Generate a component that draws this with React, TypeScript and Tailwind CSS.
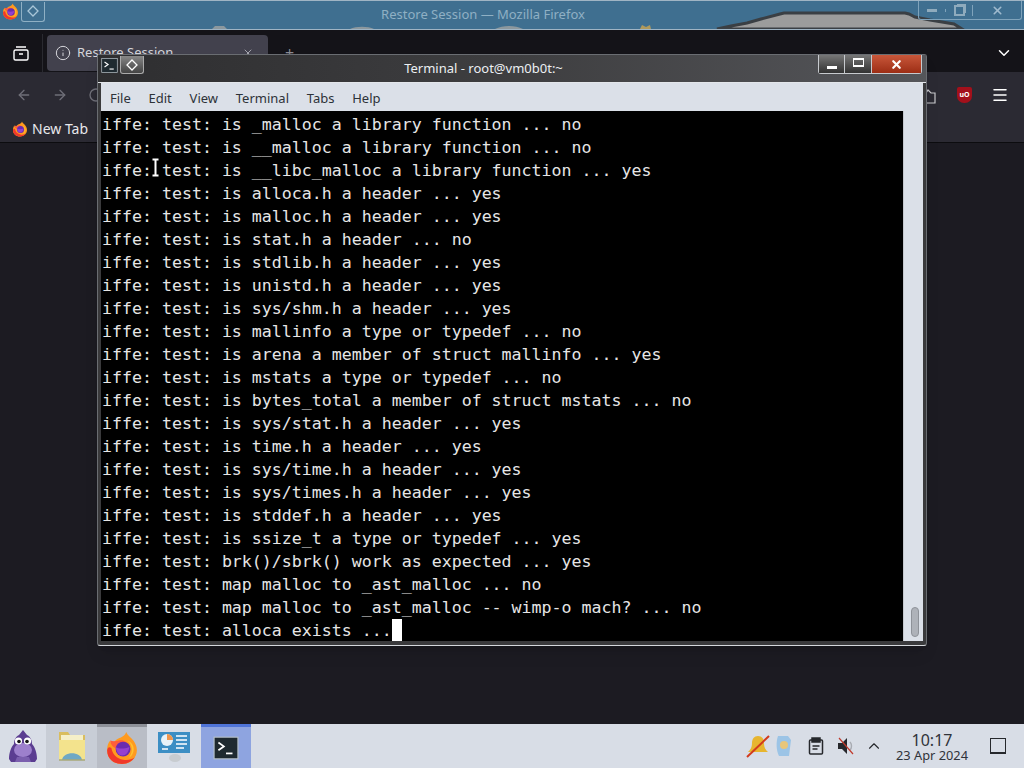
import React from "react";
import { ArrowLeft, ArrowRight, ChevronDown, ChevronUp, Info, Menu, RotateCw, X } from "lucide-react";

const lines = [
  "iffe: test: is _malloc a library function ... no",
  "iffe: test: is __malloc a library function ... no",
  "iffe: test: is __libc_malloc a library function ... yes",
  "iffe: test: is alloca.h a header ... yes",
  "iffe: test: is malloc.h a header ... yes",
  "iffe: test: is stat.h a header ... no",
  "iffe: test: is stdlib.h a header ... yes",
  "iffe: test: is unistd.h a header ... yes",
  "iffe: test: is sys/shm.h a header ... yes",
  "iffe: test: is mallinfo a type or typedef ... no",
  "iffe: test: is arena a member of struct mallinfo ... yes",
  "iffe: test: is mstats a type or typedef ... no",
  "iffe: test: is bytes_total a member of struct mstats ... no",
  "iffe: test: is sys/stat.h a header ... yes",
  "iffe: test: is time.h a header ... yes",
  "iffe: test: is sys/time.h a header ... yes",
  "iffe: test: is sys/times.h a header ... yes",
  "iffe: test: is stddef.h a header ... yes",
  "iffe: test: is ssize_t a type or typedef ... yes",
  "iffe: test: brk()/sbrk() work as expected ... yes",
  "iffe: test: map malloc to _ast_malloc ... no",
  "iffe: test: map malloc to _ast_malloc -- wimp-o mach? ... no",
];

const FoxIcon = ({ size }: { size: number }) => (
  <svg width={size} height={size} viewBox="0 0 32 32">
    <path d="M20 1c1 3 3 4 5 6 3 3 5 7 5 11 0 7-6 13-14 13S2 26 2 18c0-4 1-7 3-9 0 2 1 3 2 4 1-3 4-6 8-7 2-1 4-2 5-5z" fill="#ff9a1f" />
    <path d="M2 18c0 8 6 13 14 13 5 0 9-2 12-6-3 2-7 3-11 2-6-1-10-5-11-11-2-1-3-1-4 2z" fill="#f0392b" />
    <path d="M5 9c0 4 3 7 7 8 4 1 8 0 10-3-1-4-5-6-9-5-3 1-6 1-8 0z" fill="#ff5e3a" />
    <circle cx="17" cy="17" r="7" fill="#6a2bb0" />
    <path d="M10 15c3 2 8 2 13 0-1 5-3 8-7 8-3 0-5-3-6-8z" fill="#9440d0" />
    <path d="M21 9c3 2 5 6 4 11-1 3-2 5-4 6 3-1 6-4 6-9 0-4-3-7-6-8z" fill="#ffc22e" />
  </svg>
);

const PromptIcon = ({ size }: { size: number }) => (
  <svg width={size} height={size} viewBox="0 0 24 24" fill="none">
    <rect x="1" y="2" width="22" height="20" fill="#1f2a30" stroke="#b8c2c8" strokeWidth="1" />
    <path d="M5 7l5 3.5L5 14" stroke="#fff" strokeWidth="1.6" />
    <path d="M12 17h6" stroke="#fff" strokeWidth="1.6" />
  </svg>
);

const DiamondIcon = () => (
  <svg width="12" height="12" viewBox="0 0 12 12" fill="none">
    <path d="M6 1l5 5-5 5-5-5z" stroke="currentColor" strokeWidth="1.3" />
  </svg>
);

const Mascot = () => (
  <svg width="32" height="34" viewBox="0 0 32 34">
    <path d="M16 1l4 5c4 2 5 6 5 9 3 3 5 9 5 15l-2 3H4l-2-3c0-6 2-12 5-15 0-3 1-7 5-9z" fill="#5b3d91" />
    <ellipse cx="16" cy="21" rx="9" ry="7" fill="#9d80cc" />
    <circle cx="11.5" cy="12" r="3.6" fill="#fff" />
    <circle cx="20.5" cy="12" r="3.6" fill="#fff" />
    <circle cx="12" cy="12.5" r="1.8" fill="#111" />
    <circle cx="20" cy="12.5" r="1.8" fill="#111" />
    <path d="M8 33h16l-2-5H10z" fill="#7b5fae" />
  </svg>
);

const FolderIcon = () => (
  <svg width="30" height="32" viewBox="0 0 30 32">
    <path d="M2 2h9l2 3h15v25H2z" fill="#d9bd5f" />
    <rect x="4" y="5" width="22" height="7" fill="#f5efc8" />
    <path d="M2 10h26v20H2z" fill="#f3e38d" />
    <path d="M5 30c1-9 19-9 20 0z" fill="#6fa8c4" />
    <path d="M2 30h26" stroke="#a9a878" strokeWidth="1.5" />
  </svg>
);

const SettingsIcon = () => (
  <svg width="34" height="32" viewBox="0 0 34 32">
    <rect x="1" y="2" width="32" height="21" fill="#3c8ec4" />
    <circle cx="10" cy="10" r="6" fill="#e8f2f8" />
    <path d="M10 4a6 6 0 0 1 6 6h-6z" fill="#f0954a" />
    <path d="M19 6h11M19 10h11M19 14h11M5 19h6M19 18h8" stroke="#fff" strokeWidth="1.7" />
    <ellipse cx="18" cy="28" rx="6" ry="4" fill="#c8ccd0" />
  </svg>
);

const App = () => {
  return (
    <div className="relative flex h-[768px] w-[1024px] flex-col overflow-hidden bg-[#1c1b22] font-['Noto_Sans',sans-serif]">
      {/* firefox behind */}
      <div className="relative flex h-[30px] items-center justify-center border-y border-[#9fb4c4] bg-[#3f6f90] text-[13px] text-[#8fb0c4]">
        <div className="absolute left-0 top-0 flex h-[21px] items-center pl-[2px]">
          <FoxIcon size={17} />
          <div className="ml-[2px] flex h-[20px] w-[24px] items-center justify-center rounded-b-[3px] border border-t-0 border-[#8fb0c4] text-[#a9c6d8]">
            <DiamondIcon />
          </div>
        </div>
        <span className="ml-[-58px]">Restore Session — Mozilla Firefox</span>
        {/* wallpaper showing through the title bar */}
        <svg className="absolute bottom-0 left-0" width="1024" height="18" viewBox="0 0 1024 18">
          <path d="M717 18l14-3 16-3 14-4 19-5 4-1h121l4 1 6 3 15 3 24 4 8 5z" fill="#9c9c9c" stroke="#3a3f44" strokeWidth="3" />
          <path d="M350 18c6-3 18-3 24 0zM495 18c8-4 20-4 28 0zM212 18l3-3h9l3 3z" fill="#8c989e" />
          <path d="M640 18l2-4 4 2 4-2 1 4z" fill="#b09a5c" />
        </svg>
        <div className="absolute right-[2px] top-0 flex h-[19px] items-center rounded-b-[3px] border border-t-0 border-[#7fa3bb] text-[#9fbace]">
          <div className="flex w-[27px] justify-center border-r border-[#7fa3bb]"><div className="h-[3px] w-[10px] bg-[#8fabbd]" /></div>
          <div className="flex w-[27px] justify-center border-r border-[#7fa3bb]"><div className="h-[11px] w-[11px] border-2 border-[#8fabbd] shadow-[2px_-2px_0_-1px_#8fabbd]" /></div>
          <div className="flex w-[48px] justify-center"><X size={13} strokeWidth={3} /></div>
        </div>
      </div>
      <div className="flex h-[42px] items-center bg-[#141318] pt-[4px]">
        <div className="flex h-full w-[43px] items-center justify-center border-r border-[#2a2a30] text-white">
          <svg width="18" height="18" viewBox="0 0 18 18" fill="none" stroke="currentColor" strokeWidth="1.4">
            <rect x="2" y="6" width="14" height="10" rx="1.5" />
            <path d="M4 3h10M7 10h4" />
          </svg>
        </div>
        <div className="ml-[4px] flex h-[36px] w-[221px] items-center rounded-[4px] bg-[#42414d] px-[8px] text-[13px] text-[#d5d5da]">
          <Info size={16} strokeWidth={1.5} />
          <span className="ml-[6px]">Restore Session</span>
          <X size={12} className="ml-auto mr-[6px] text-[#a5a5ae]" />
        </div>
        <span className="ml-[17px] text-[#8a8a92]">+</span>
        <ChevronDown size={18} className="ml-auto mr-[11px] text-white" />
      </div>
      <div className="relative flex h-[43px] items-center bg-[#2b2a33] pl-[16px] pt-[3px] text-[#6f6f78]">
        <ArrowLeft size={16} />
        <ArrowRight size={16} className="ml-[20px]" />
        <RotateCw size={16} className="ml-[20px]" />
        {/* extension icon, only its right edge clears the terminal */}
        <svg className="absolute left-[921px] top-[17px]" width="15" height="15" viewBox="0 0 15 15" fill="none" stroke="#c8c8cc" strokeWidth="1.2">
          <path d="M2 4h3l2-3 3 3h4v10H2z" />
        </svg>
        <div className="ml-auto mr-[19px] flex h-[16px] w-[15px] items-center justify-center rounded-b-[7px] rounded-t-[2px] bg-[#a3101b] text-[7px] font-bold text-white">uO</div>
        <Menu size={18} className="mr-[15px] text-white" />
      </div>
      <div className="flex h-[28px] items-center gap-[4px] border-b border-[#0c0c0f] bg-[#2b2a33] pl-[12px] text-[14px] text-[#e8e8ec]">
        <FoxIcon size={16} />
        <span>New Tab</span>
      </div>
      <div className="flex-1" />

      {/* taskbar */}
      <div className="flex h-[44px] items-stretch bg-[#d8dde6]">
        <div className="flex w-[46px] items-center justify-center"><Mascot /></div>
        <div className="flex w-[51px] items-center justify-center bg-[#c8cdd6]"><FolderIcon /></div>
        <div className="flex w-[50px] items-center justify-center border-t-[3px] border-[#8d9098] bg-[#b9bdc6]"><FoxIcon size={34} /></div>
        <div className="flex w-[54px] items-center justify-center"><SettingsIcon /></div>
        <div className="flex w-[50px] items-center justify-center border-t-[3px] border-[#4f74d8] bg-[#8ea4e0]"><PromptIcon size={26} /></div>
        <div className="ml-auto flex items-center">
          <svg width="26" height="26" viewBox="0 0 26 26">
            <path d="M13 3c4 0 6 3 6 7 0 5 2 7 4 9H3c2-2 4-4 4-9 0-4 2-7 6-7z" fill="#e7b52f" />
            <path d="M2 24L24 3" stroke="#d23a1d" strokeWidth="2" />
          </svg>
          <svg className="ml-[4px]" width="18" height="24" viewBox="0 0 18 24">
            <path d="M3 2h10l3 4-2 16H4C1 16 1 8 3 2z" fill="#9cc4e6" />
            <circle cx="9" cy="11" r="4" fill="#e8c67a" />
          </svg>
          <svg className="ml-[15px]" width="16" height="18" viewBox="0 0 16 18" fill="none" stroke="#26282c" strokeWidth="1.5">
            <rect x="1.5" y="3" width="13" height="14" rx="1" />
            <rect x="4" y="1" width="8" height="4" fill="#26282c" />
            <path d="M4.5 9h7M4.5 12h5" />
          </svg>
          <svg className="ml-[12px]" width="20" height="20" viewBox="0 0 20 20" fill="none">
            <path d="M2 7h4l5-5v16l-5-5H2z" fill="#26282c" />
            <path d="M14 6c2 2 2 6 0 8" stroke="#a8abb2" strokeWidth="1.4" />
            <path d="M3 2l14 16" stroke="#c0392b" strokeWidth="1.2" />
          </svg>
          <ChevronUp size={18} strokeWidth={1.5} className="ml-[9px] text-[#26282c]" />
          <div className="ml-[12px] flex w-[74px] flex-col items-center pt-[2px] text-[#30333a]">
            <span className="text-[16px] leading-[16px]">10:17</span>
            <span className="text-[12.8px] leading-[14px]">23 Apr 2024</span>
          </div>
          <div className="ml-[21px] mr-[18px] h-[16px] w-[16px] border border-b-2 border-[#26282c]" />
        </div>
      </div>

      {/* terminal window */}
      <div className="absolute left-[97px] top-[54px] flex h-[592px] w-[830px] flex-col rounded-[3px] border border-[#6a6d72] border-b-[#d5d8dc] bg-[#3a3a3c] px-[3px] pb-[4px] shadow-lg">
        <div className="relative mx-[-3px] flex h-[28px] shrink-0 items-center justify-center border-b border-[#e3e6ea] bg-gradient-to-r from-[#2e2e30] via-[#3e3e40] to-[#55565a] text-[13px] text-[#eceff2]">
          <div className="absolute left-[3px] top-[1px] flex items-center">
            <PromptIcon size={17} />
            <div className="ml-[2px] flex h-[18px] w-[24px] items-center justify-center rounded-b-[3px] border border-t-0 border-[#aaa] bg-gradient-to-b from-[#888] to-[#444] text-white">
              <DiamondIcon />
            </div>
          </div>
          <span className="ml-[-57px]">Terminal - root@vm0b0t:~</span>
          <div className="absolute right-[4px] top-0 flex h-[19px] items-stretch rounded-b-[3px] border border-t-0 border-[#c7cace] text-white">
            <div className="flex w-[26px] items-end justify-center border-r border-[#c7cace] bg-gradient-to-b from-[#777] to-[#333] pb-[4px]"><div className="h-[3px] w-[10px] bg-white" /></div>
            <div className="flex w-[27px] items-start justify-center border-r border-[#c7cace] bg-gradient-to-b from-[#777] to-[#333] pt-[3px]"><div className="h-[9px] w-[11px] border-2 border-x-[1.5px] border-white" /></div>
            <div className="flex w-[49px] items-center justify-center bg-gradient-to-b from-[#c9573a] to-[#9c2d14]"><X size={13} strokeWidth={4} /></div>
          </div>
        </div>
        <div className="flex h-[28px] shrink-0 items-center gap-[17.75px] bg-[#dbe0e8] pl-[9px] pt-[3px] text-[13px] text-[#2d3238]">
          <span>File</span>
          <span>Edit</span>
          <span>View</span>
          <span>Terminal</span>
          <span>Tabs</span>
          <span>Help</span>
        </div>
        <div className="flex min-h-0 flex-1 overflow-hidden bg-[#dbe0e8]">
          <div className="w-[802px] overflow-hidden bg-black pl-[1px] pt-[2px] font-['DejaVu_Sans_Mono',monospace] text-[16.6px] leading-[23px] whitespace-pre text-[#e6e6e6]">
            {lines.map((line) => (
              <div key={line} className="h-[23px]">{line}</div>
            ))}
            <div className="flex h-[23px]">
              <span>iffe: test: alloca exists ...</span>
              <span className="h-[23px] w-[10px] bg-white" />
            </div>
          </div>
          <div className="flex flex-1 items-end justify-center border-l border-[#c4c8ce] pb-[4px] pl-[2px]">
            <div className="h-[30px] w-[8px] rounded-full border border-[#8e9299] bg-[#aeb2b9]" />
          </div>
        </div>
      </div>

      {/* text cursor over the terminal */}
      <svg className="absolute left-[151px] top-[158px]" width="9" height="19" viewBox="0 0 9 19" fill="none">
        <path d="M1.5 1.5h6M4.5 1.5v16M1.5 17.5h6" stroke="#000" strokeWidth="3.4" />
        <path d="M1.5 1.5h6M4.5 1.5v16M1.5 17.5h6" stroke="#fff" strokeWidth="2" />
      </svg>
    </div>
  );
};

export default App;
